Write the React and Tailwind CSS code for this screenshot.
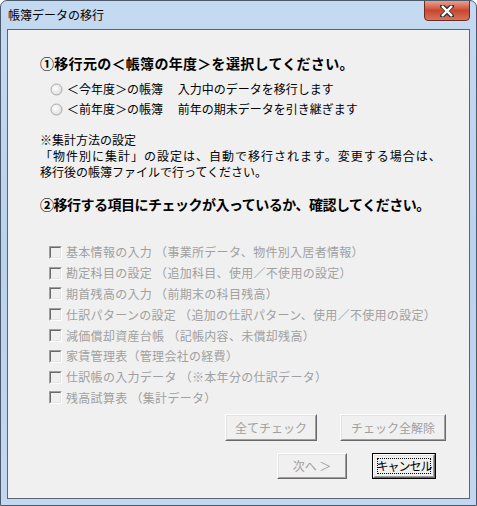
import React from "react";

const items = [
  "基本情報の入力 （事業所データ、物件別入居者情報）",
  "勘定科目の設定 （追加科目、使用／不使用の設定）",
  "期首残高の入力 （前期末の科目残高）",
  "仕訳パターンの設定 （追加の仕訳パターン、使用／不使用の設定）",
  "減価償却資産台帳 （記帳内容、未償却残高）",
  "家賃管理表（管理会社の経費）",
  "仕訳帳の入力データ （※本年分の仕訳データ）",
  "残高試算表 （集計データ）",
];

const Radio = () => (
  <svg width="13" height="13" viewBox="0 0 13 13" className="shrink-0">
    <defs>
      <radialGradient id="rg" cx="0.4" cy="0.4" r="0.7">
        <stop offset="0" stopColor="#ffffff" />
        <stop offset="1" stopColor="#d8d8d8" />
      </radialGradient>
    </defs>
    <circle cx="6.5" cy="6.5" r="5.5" fill="url(#rg)" stroke="#a8a8a8" strokeWidth="1" />
  </svg>
);

const Check = () => (
  <div className="w-[13px] h-[13px] shrink-0 border border-t-[#a0a0a0] border-l-[#a0a0a0] border-b-white border-r-white">
    <div className="w-full h-full border border-t-[#696969] border-l-[#696969] border-b-[#e3e3e3] border-r-[#e3e3e3] bg-[#f0f0f0]" />
  </div>
);

const Btn = ({ children, w, h, disabled, primary }) => (
  <div
    className={`${w} ${h} shrink-0 flex items-center justify-center text-[12px] whitespace-nowrap ${
      primary ? "border border-black" : ""
    }`}
  >
    <div className="w-full h-full border border-t-white border-l-white border-b-[#696969] border-r-[#696969] flex">
      <div className="w-full h-full border border-t-[#e3e3e3] border-l-[#e3e3e3] border-b-[#a0a0a0] border-r-[#a0a0a0] flex items-center justify-center p-[2px]">
        <div
          className={`w-full h-full flex items-center justify-center ${
            primary ? "border border-dotted border-black text-black tracking-[-1px]" : ""
          } ${disabled ? "text-[#a0a0a0]" : ""}`}
        >
          {children}
        </div>
      </div>
    </div>
  </div>
);

export default function App() {
  return (
    <div
      className="w-[477px] h-[506px] flex flex-col rounded-t-[7px] border border-[#4a5a6c] bg-gradient-to-b from-[#c4daf1] via-[#b9d2ee] to-[#c3d8ef] overflow-hidden"
      style={{ fontFamily: '"Noto Sans CJK JP", "Noto Sans", sans-serif' }}
    >
      {/* title bar */}
      <div className="h-[28px] flex items-start justify-between shrink-0">
        <div className="pl-[7px] pt-[5px] text-[12px] leading-[18px] text-black">帳簿データの移行</div>
        <div className="mr-[6px] mt-[-1px] w-[46px] h-[21px] rounded-b-[4px] border border-[#6e2b20] bg-gradient-to-b from-[#e8a08f] via-[#c9462f] to-[#d5735c] flex items-center justify-center">
          <svg width="14" height="12" viewBox="0 0 14 12">
            <path d="M2 1 L7 5 L12 1 M2 11 L7 7 L12 11" stroke="#3a3a3a" strokeWidth="4.5" fill="none" strokeLinecap="square" />
            <path d="M2 1 L12 11 M12 1 L2 11" stroke="#ffffff" strokeWidth="2.4" fill="none" />
          </svg>
        </div>
      </div>

      {/* client area */}
      <div className="mx-[6px] w-[463px] h-[470px] border border-[#5a6572] bg-[#f0f0f0] flex flex-col pl-[32px] pr-[23px] text-black">
        <div className="mt-[23px] h-[20px] leading-[20px] text-[14px] font-bold tracking-[0.3px]">
          ①移行元の＜帳簿の年度＞を選択してください。
        </div>
        <div className="mt-[6px] flex flex-col pl-[10px] text-[12px]">
          <div className="h-[20px] flex items-center gap-[4px]">
            <Radio />
            <span>＜今年度＞の帳簿　 入力中のデータを移行します</span>
          </div>
          <div className="h-[20px] flex items-center gap-[4px]">
            <Radio />
            <span>＜前年度＞の帳簿　 前年の期末データを引き継ぎます</span>
          </div>
        </div>
        <div className="mt-[13px] text-[12px] leading-[16px]">
          <div>※集計方法の設定</div>
          <div className="tracking-[1px]">「物件別に集計」の設定は、自動で移行されます。変更する場合は、</div>
          <div>移行後の帳簿ファイルで行ってください。</div>
        </div>
        <div className="mt-[14px] h-[20px] leading-[20px] text-[14px] font-bold tracking-[-0.5px]">
          ②移行する項目にチェックが入っているか、確認してください。
        </div>
        <div className="mt-[28px] flex flex-col pl-[9px] text-[12px] text-[#a0a0a0]">
          {items.map((t) => (
            <div key={t} className="h-[20.8px] flex items-center gap-[4px]">
              <Check />
              <span className="tracking-[0.3px]">{t}</span>
            </div>
          ))}
        </div>
        <div className="mt-[6px] flex justify-end gap-[23px]">
          <Btn w="w-[92px]" h="h-[27px]" disabled>全てチェック</Btn>
          <Btn w="w-[106px]" h="h-[27px]" disabled>チェック全解除</Btn>
        </div>
        <div className="mt-[12px] flex justify-end gap-[25px] pr-[10px]">
          <Btn w="w-[70px]" h="h-[26px]" disabled>次へ ＞</Btn>
          <Btn w="w-[64px]" h="h-[26px]" primary>キャンセル</Btn>
        </div>
      </div>
    </div>
  );
}
